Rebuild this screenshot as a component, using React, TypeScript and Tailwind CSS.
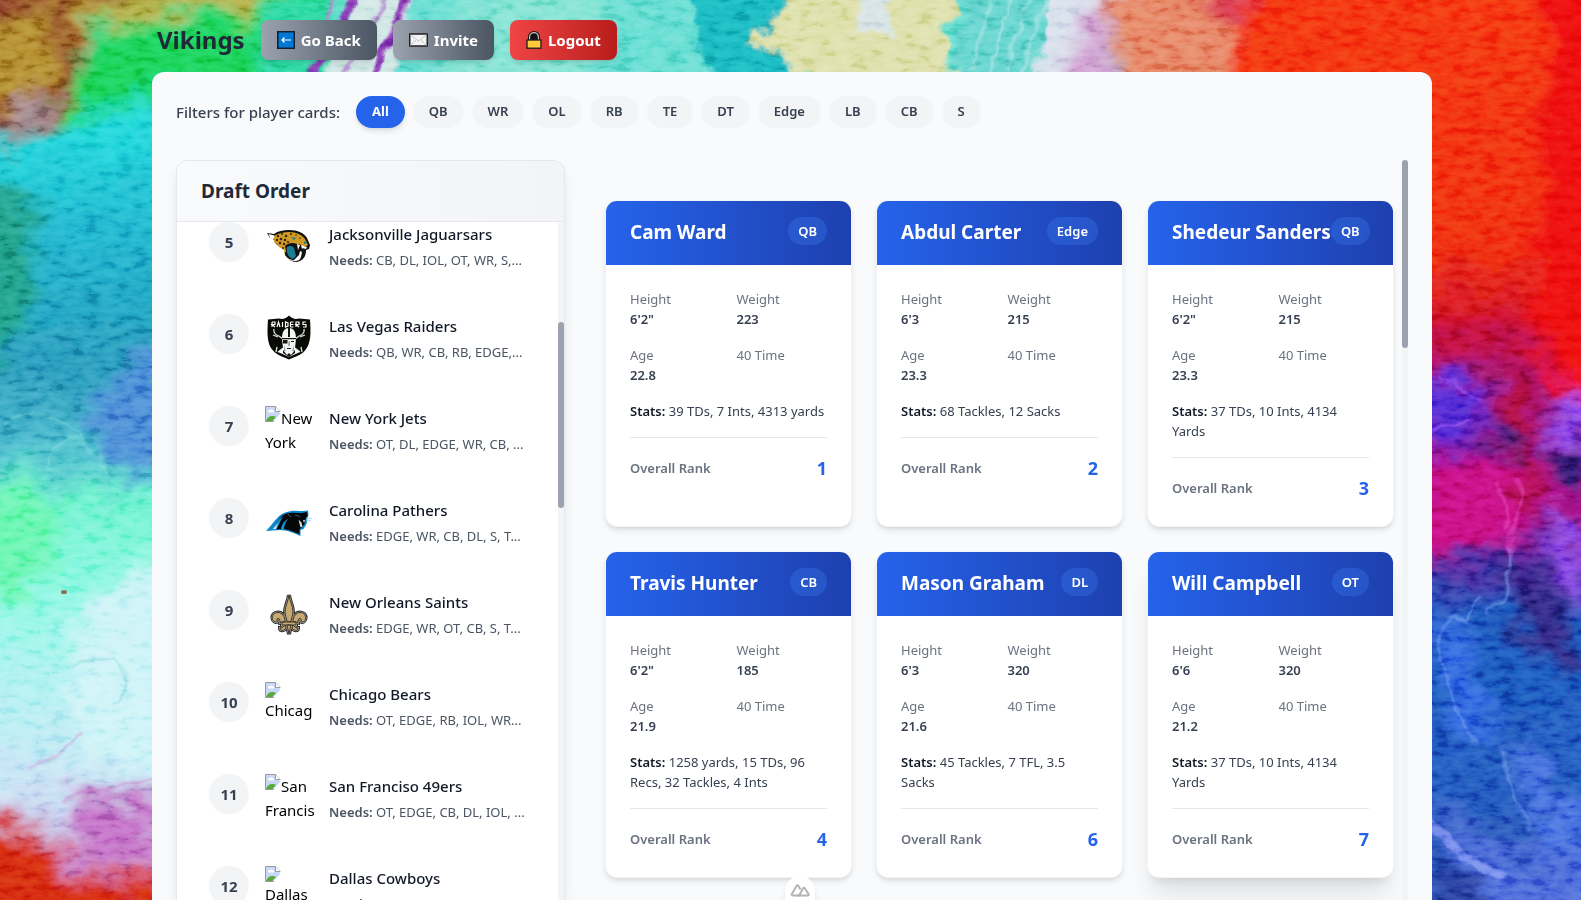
import type { ReactNode } from 'react';

const FILTERS = ['All', 'QB', 'WR', 'OL', 'RB', 'TE', 'DT', 'Edge', 'LB', 'CB', 'S'];

type Team = { pick: number; name: string; needs: string; logo: ReactNode };
type Player = {
  name: string;
  position: string;
  height: string;
  weight: string;
  age: string;
  stats: string;
  rank: number;
};

const PLAYERS: Player[] = [
  { name: 'Cam Ward', position: 'QB', height: '6\'2"', weight: '223', age: '22.8', stats: '39 TDs, 7 Ints, 4313 yards', rank: 1 },
  { name: 'Abdul Carter', position: 'Edge', height: "6'3", weight: '215', age: '23.3', stats: '68 Tackles, 12 Sacks', rank: 2 },
  { name: 'Shedeur Sanders', position: 'QB', height: '6\'2"', weight: '215', age: '23.3', stats: '37 TDs, 10 Ints, 4134 Yards', rank: 3 },
  { name: 'Travis Hunter', position: 'CB', height: '6\'2"', weight: '185', age: '21.9', stats: '1258 yards, 15 TDs, 96 Recs, 32 Tackles, 4 Ints', rank: 4 },
  { name: 'Mason Graham', position: 'DL', height: "6'3", weight: '320', age: '21.6', stats: '45 Tackles, 7 TFL, 3.5 Sacks', rank: 6 },
  { name: 'Will Campbell', position: 'OT', height: "6'6", weight: '320', age: '21.2', stats: '37 TDs, 10 Ints, 4134 Yards', rank: 7 },
];

function BrokenImage({ alt, stacked = false }: { alt: string; stacked?: boolean }) {
  return (
    <div className="h-12 w-12 text-[15px] leading-6 text-black">
      <svg viewBox="0 0 16 16" className={stacked ? 'block h-4 w-4' : 'inline-block h-4 w-4 align-top'} aria-hidden="true">
        <path d="M.5.5h10l5 5v10H.5z" fill="#c6d8f6" stroke="#9a9a9a" />
        <path d="M3 5.500a1.500 1.500 0 0 1 2-1.300 1.600 1.600 0 0 1 3 .3 1 1 0 0 1 .3 2H3.500A1 1 0 0 1 3 5.500z" fill="#fff" />
        <path d="M1 15c1-3.500 4-5.500 7-5l3 .8L7.500 15z" fill="#57ab35" />
        <path d="M10.500.5v5h5" fill="#fff" stroke="#9a9a9a" />
        <path d="M16 8.500V16H9z" fill="#fff" />
        <path d="M15.500 5.500v3.300M9 15.500l6.500-6.700" stroke="#fff" strokeWidth="1.400" />
      </svg>
      {alt}
    </div>
  );
}

function Jaguar() {
  return (
    <svg viewBox="0 0 48 48" className="h-12 w-12" aria-label="Jacksonville Jaguars">
      <path d="M2 11l7 1c4-3 9-4 15-4 9 0 15 3 18 8l3 7-1 4-3 1c0 6-2 10-9 12-6 0-9-3-12-7l-3-6-6-5-3-5-3-1z" fill="#111" />
      <path d="M9 14c5-3 10-4 15-4 8 0 13 3 16 7l3 6-3 2-6-3-7 1-4 3-3 5-5-4-3-5-3-2z" fill="#d19a24" />
      <path d="M3.500 12l6 1.500-1 4-3-1zM10 20l4 5 5 3 1 5c-3-1-4-5-5-6zM38 24l4 1-1 2-4-1z" fill="#fff" />
      <path d="M20 24c5-5 12-3 16 1l-1 9-6 4-7-5z" fill="#111" />
      <path d="M22 25c3-2 6-1 7 1l2 8-3 3c-5-2-7-6-6-12z" fill="#187f96" />
      <path d="M32 22l1 6 2-5zM36 23l1 4 2-3zM19 31c2 5 6 7 10 7l5-5 1-4 2 1-1 5c-1 3-3 4-6 4-5 0-9-3-11-8z" fill="#fff" />
      <path d="M26 15l5 1-2 2zM39 19l3 2-3 1z" fill="#187f96" />
      <g fill="#3a2507">
        <circle cx="13" cy="14" r="1.200" /><circle cx="17" cy="12" r="1" /><circle cx="21" cy="14" r="1.300" />
        <circle cx="26" cy="12" r="1" /><circle cx="31" cy="13" r=".8" /><circle cx="16" cy="17" r="1.300" />
        <circle cx="12" cy="18" r="1.200" /><circle cx="20" cy="18" r="1.300" /><circle cx="15" cy="21" r="1.300" />
        <circle cx="19" cy="22" r="1.200" /><circle cx="23" cy="20" r="1.100" /><circle cx="35" cy="16" r=".7" />
        <circle cx="18" cy="26" r="1" />
      </g>
    </svg>
  );
}

function Raider() {
  return (
    <svg viewBox="0 0 48 48" className="h-12 w-12" aria-label="Las Vegas Raiders">
      <path d="M24 1.500c3 3 6 4 10 3l11 1c1 14 1 24-5 31-4 5-10 6-16 9-6-3-12-4-16-9C2 30 2 20 3 5.500l11-1c4 1 7 0 10-3z" fill="#080a04" />
      <path d="M7 8v5M7 8h3v2.500H7l3 2.500M12 13l1.500-5 1.500 5M17.500 8v5M20.500 8v5l2.500-1V9zM25.500 8h3m-3 2.500h3m-3 2.500h3m-3-5v5M31 13V8h3v2.500h-3l3 2.500M41 8h-3v2.500h3V13h-3" fill="none" stroke="#fff" strokeWidth="1.200" />
      <path d="M9 15c-1 4 2 6 5 7l21 16M39 15c1 4-2 6-5 7L13 38M8 21l5 2M40 21l-5 2M12 33l-1 5M36 33l1 5" fill="none" stroke="#dfe1e1" strokeWidth="1.300" />
      <path d="M17 25c0-7 2-11 7-11s7 4 7 11l-1 9 5 4-11 5-11-5 5-4z" fill="#f4f5f5" />
      <path d="M23 14h2v9h-2zM17 24h14v1.200H17zM18 26h4.500v3.500H18zM26 27h3v1h-3zM22 34h4v1h-4zM18 36l4 5 2-2 2 2 4-5v3l-6 4-6-4z" fill="#15170f" />
      <path d="M23.500 27h1.500v5h-2zM19 31l2 6h-2zM29 31l-2 6h2z" fill="#9fa4a6" />
    </svg>
  );
}

function Panther() {
  return (
    <svg viewBox="0 0 48 48" className="h-12 w-12" aria-label="Carolina Panthers">
      <path d="M1 33C8 26 12 18 19 15l3-1c5-2 12-1 17-1l4-.5.5 4.500-1 3-1 6-3 5-3 1v6c-7-3-13-6-21-6z" fill="#0d86cb" />
      <path d="M5 32c7-6 9-13 15-16 6-2 12-1 17-1l5-1 .5 4-2 3-1 5-3 4-2 1v5c-6-2-12-5-17-5z" fill="#050708" />
      <path d="M5 32l8-9c1-2 3-3 5-4-3 4-4 8-7 13zM16 31c1-5 3-8 7-10-3 4-4 7-4 11z" fill="#1593d4" />
      <path d="M8 31l5-6-2 6zM33.500 21.500l1 4 1 4 2-1-1-4zM38 22l1 3 1-3z" fill="#d8dde0" />
      <path d="M30 17l5 1.500M23 16l3 3" fill="none" stroke="#3f5c6b" />
      <path d="M41 20l6 .5M41 22l5 1" fill="none" stroke="#9bcde9" strokeWidth=".8" />
    </svg>
  );
}

function Saint() {
  const lily =
    'M24 5c-1 7-4 11-4 17 0 3 1.500 6 2 9.500h4C26.500 28 28 25 28 22c0-6-3-10-4-17zM20 31.500c0-5-3-9-7-9-4 0-6 3-5.500 6 .5 3 3 4 5 3-1-1-1-3 .5-3 2 0 2 2 2 4zM28 31.500c0-5 3-9 7-9 4 0 6 3 5.500 6-.5 3-3 4-5 3 1-1 1-3-.5-3-2 0-2 2-2 4zM22 35l2 9 2-9zM20 35c-1 1-2 3-5 3 0 3 4 3 6 0zM28 35c1 1 2 3 5 3 0 3-4 3-6 0zM17 32h14v3H17z';
  return (
    <svg viewBox="0 0 48 48" className="h-12 w-12" aria-label="New Orleans Saints">
      <path d={lily} fill="#2c2d2e" stroke="#2c2d2e" strokeWidth="4" />
      <path d={lily} fill="#aaa59b" stroke="#aaa59b" strokeWidth="2" />
      <path d={lily} fill="#c8a970" stroke="#3a3429" strokeWidth="1" />
    </svg>
  );
}

const TEAMS: Team[] = [
  { pick: 5, name: 'Jacksonville Jaguarsars', needs: 'CB, DL, IOL, OT, WR, S,...', logo: <Jaguar /> },
  { pick: 6, name: 'Las Vegas Raiders', needs: 'QB, WR, CB, RB, EDGE,...', logo: <Raider /> },
  { pick: 7, name: 'New York Jets', needs: 'OT, DL, EDGE, WR, CB, ...', logo: <BrokenImage alt="New York" /> },
  { pick: 8, name: 'Carolina Pathers', needs: 'EDGE, WR, CB, DL, S, T...', logo: <Panther /> },
  { pick: 9, name: 'New Orleans Saints', needs: 'EDGE, WR, OT, CB, S, T...', logo: <Saint /> },
  { pick: 10, name: 'Chicago Bears', needs: 'OT, EDGE, RB, IOL, WR...', logo: <BrokenImage alt="Chicag" stacked /> },
  { pick: 11, name: 'San Franciso 49ers', needs: 'OT, EDGE, CB, DL, IOL, ...', logo: <BrokenImage alt="San Francis" /> },
  { pick: 12, name: 'Dallas Cowboys', needs: 'RB, WR, EDGE, DT, TE...', logo: <BrokenImage alt="Dallas" stacked /> },
];

function Painting() {
  return (
    <svg viewBox="0 0 1581 900" preserveAspectRatio="xMidYMid slice" className="absolute inset-0 h-full w-full" aria-hidden="true">
      <defs>
        <linearGradient id="left" x1="0" y1="0" x2="0" y2="1">
          <stop offset="0" stopColor="#13cf55" />
          <stop offset=".12" stopColor="#14dc9c" />
          <stop offset=".19" stopColor="#1fd6da" />
          <stop offset=".28" stopColor="#1ab4cd" />
          <stop offset=".42" stopColor="#2295b8" />
          <stop offset=".5" stopColor="#45b8cb" />
          <stop offset=".55" stopColor="#69f2cd" />
          <stop offset=".65" stopColor="#8df7e3" />
          <stop offset=".75" stopColor="#b4eff3" />
          <stop offset=".84" stopColor="#c8e0f4" />
          <stop offset=".9" stopColor="#c988cb" />
          <stop offset="1" stopColor="#cf3420" />
        </linearGradient>
        <linearGradient id="right" x1="0" y1="0" x2="0" y2="1">
          <stop offset="0" stopColor="#f53110" />
          <stop offset=".3" stopColor="#f0280c" />
          <stop offset=".38" stopColor="#cc0d25" />
          <stop offset=".46" stopColor="#7c16a0" />
          <stop offset=".54" stopColor="#b30d80" />
          <stop offset=".61" stopColor="#4a1f9a" />
          <stop offset=".66" stopColor="#184fb8" />
          <stop offset=".8" stopColor="#1a55bd" />
          <stop offset="1" stopColor="#2c49b0" />
        </linearGradient>
        <filter id="brush" x="-20%" y="-20%" width="140%" height="140%">
          <feGaussianBlur stdDeviation="9" result="soft" />
          <feTurbulence type="fractalNoise" baseFrequency=".025 .035" numOctaves="5" seed="7" result="noise" />
          <feDisplacementMap in="soft" in2="noise" scale="50" xChannelSelector="R" yChannelSelector="G" />
          <feGaussianBlur stdDeviation=".8" />
        </filter>
        <filter id="edge" x="-20%" y="-20%" width="140%" height="140%">
          <feGaussianBlur stdDeviation="2" result="soft" />
          <feTurbulence type="fractalNoise" baseFrequency=".04" numOctaves="4" seed="5" result="noise" />
          <feDisplacementMap in="soft" in2="noise" scale="30" xChannelSelector="R" yChannelSelector="G" />
          <feGaussianBlur stdDeviation=".7" />
        </filter>
        <filter id="fine" x="-20%" y="-20%" width="140%" height="140%">
          <feGaussianBlur stdDeviation="1.200" result="soft" />
          <feTurbulence type="fractalNoise" baseFrequency=".04" numOctaves="3" seed="3" result="noise" />
          <feDisplacementMap in="soft" in2="noise" scale="14" xChannelSelector="R" yChannelSelector="G" />
        </filter>
        <filter id="grain" x="0" y="0" width="100%" height="100%">
          <feTurbulence type="fractalNoise" baseFrequency=".06 .14" numOctaves="5" seed="12" />
          <feColorMatrix type="matrix" values="2.400 0 0 0 -.7  2.400 0 0 0 -.7  2.400 0 0 0 -.7  0 0 0 0 1" />
        </filter>
      </defs>
      <rect width="1581" height="900" fill="#62dcd0" />
      <g filter="url(#brush)">
        <rect x="-60" y="-60" width="400" height="1020" fill="url(#left)" />
        <rect x="1215" y="-60" width="440" height="1020" fill="url(#right)" />
        <path d="M-40-40H190L90 30 65 115 45 130-40 140z" fill="#8b3422" />
        <path d="M-20 20L50 5 60 60 30 110-20 110zM75-20L100 5 85 45 70 50z" fill="#b08a2c" />
        <path d="M20 100L60 95 45 120 10 125z" fill="#a58b95" />
        <path d="M90 15L170-30H290L250 20 190 10 110 30z" fill="#b0ac40" />
        <path d="M70 80L100 40 150 25 300 20 300 80 150 95 60 125z" fill="#12d152" />
        <path d="M270 0H340L320 90H250z" fill="#27d7a0" />
        <path d="M90 400L170 340 200 480 120 478 90 440z" fill="#4589d4" />
        <path d="M-20 170L40 200 30 300-20 400z" fill="#1c9f88" />
        <path d="M-20 490L60 490 40 590-20 600z" fill="#63f5ae" />
        <path d="M100 590L170 560V770L90 770 60 680z" fill="#cbf3f7" />
        <path d="M60 800L160 790V850L90 870z" fill="#c06ac4" />
        <path d="M-40 815L40 830 80 880 170 880V960H-40z" fill="#d42708" />
        <path d="M480-20H600V90H440z" fill="#7fe2d2" />
        <path d="M1030-40H1120L1100 110H1010z" fill="#d7dfeb" />
        <path d="M1080 15L1110 5V110H1060z" fill="#cf9fd0" />
        <path d="M1110-40H1230L1230 110H1115z" fill="#e58260" />
        <path d="M1205-20H1250V20L1210 20z" fill="#d8344a" />
        <path d="M1550-20H1620V400H1560L1530 300z" fill="#ee0810" />
        <path d="M1420 365L1475 380 1490 410 1470 440 1420 450z" fill="#4c22d2" />
        <path d="M1500 370L1540 380 1535 520 1500 480z" fill="#b00d3a" />
        <path d="M1490 420L1530 440 1520 465 1480 450zM1545 450L1590 440V490L1545 480z" fill="#271273" />
        <path d="M1555 405L1600 385V440H1550zM1545 510L1570 520 1590 600 1560 580z" fill="#8c45ef" />
        <path d="M1420 470L1510 460 1530 540 1420 560z" fill="#c80d82" />
        <path d="M1500 560L1560 580 1590 680 1530 650z" fill="#2c2382" />
        <path d="M1430 610L1470 630 1490 740 1460 740 1440 660z" fill="#2c63e0" />
        <path d="M1500 740L1570 790 1600 880 1560 860z" fill="#3f6ce0" />
        <path d="M1430 790L1500 860 1600 840V920H1500z" fill="#4565d8" />
        <path d="M1440 850L1490 890V920H1430z" fill="#20389b" />
      </g>
      <g filter="url(#edge)">
        <path d="M355-30L425-30 380 100 315 100z" fill="#cfe6e4" />
        <path d="M690-30H800L790 100H745L700 60z" fill="#18b7bf" />
        <path d="M800-30H965L945 30 960 100H815L785 55 740 38 775 22z" fill="#dcdea7" />
        <path d="M850-30L890-30 890 30 860 30z" fill="#d5e3e4" />
        <path d="M965-30H1055L1030 100H955z" fill="#5ed2cb" />
      </g>
      <g filter="url(#fine)" fill="none" strokeLinecap="round">
        <path d="M355-10C345 25 325 55 308 80M405-10C400 25 380 45 372 85" stroke="#8735b4" strokeWidth="7" />
        <path d="M340-10L318 40M385-10C380 30 350 50 340 85M412-10L396 30" stroke="#b584cf" strokeWidth="3" />
        <g strokeWidth="2" opacity=".5">
          <path d="M4 422C60 405 80 430 110 475M50 470C45 430 100 430 108 474" stroke="#8ce3e0" />
          <path d="M75 665L115 658Q140 690 110 705" stroke="#67c9cf" />
          <path d="M30 770L80 735M60 800L150 780M70 850L150 830" stroke="#c25bb9" />
        </g>
        <path d="M1440 640L1450 615 1465 622 1480 595M1510 550L1505 600 1490 612M1440 640L1450 690 1475 745M1502 750L1510 790 1530 830" stroke="#6f9bf0" strokeWidth="2.500" opacity=".65" />
        <path d="M1425 815Q1450 850 1500 875" stroke="#7f94f2" strokeWidth="10" opacity=".8" />
        <path d="M1515 480C1530 490 1515 520 1508 555M1500 480L1508 530" stroke="#e33cc0" strokeWidth="3" opacity=".6" />
        <path d="M1440 375L1480 400M1435 430L1470 420" stroke="#9b4cf4" strokeWidth="4" opacity=".6" />
        <path d="M990 5L970 72M1010 0L990 72M1045 0L1020 72M1030 0L1005 72" stroke="#a9e4e4" strokeWidth="3" opacity=".7" />
      </g>
      <rect width="1581" height="900" filter="url(#grain)" opacity=".4" className="mix-blend-soft-light" />
      <ellipse cx="64" cy="592" rx="3" ry="2" fill="#8d6d5c" />
    </svg>
  );
}

function ArrowIcon() {
  return (
    <svg viewBox="0 0 18 18" className="h-[18px] w-[18px]" aria-hidden="true">
      <rect x=".75" y=".75" width="16.500" height="16.500" fill="#0078d7" stroke="#12202e" strokeWidth="1.500" />
      <path d="M14 9H5M7.500 6.500L5 9l2.500 2.500" fill="none" stroke="#fff" strokeWidth="1.200" />
    </svg>
  );
}

function EnvelopeIcon() {
  return (
    <svg viewBox="0 0 19 18" className="h-[18px] w-[19px]" aria-hidden="true">
      <rect x=".75" y="3" width="17.500" height="12" fill="#f4f4f4" stroke="#222" strokeWidth="1.500" />
      <path d="M1.500 4l8 6 8-6M1.500 14.500l6-6M17.500 14.500l-6-6" fill="none" stroke="#c4c4c4" />
    </svg>
  );
}

function LockIcon() {
  return (
    <svg viewBox="0 0 16 18" className="h-[18px] w-4" aria-hidden="true">
      <path d="M3 9.500V6a5 5 0 0 1 10 0v3.500z" fill="#111" stroke="#111" strokeWidth="2" />
      <path d="M3.600 9V6a4.400 4.400 0 0 1 8.800 0v3" fill="none" stroke="#c8c8c8" strokeWidth="1.200" />
      <rect x="1" y="9" width="14" height="8.200" fill="#ffc83d" stroke="#1c1c1c" strokeWidth="1.300" />
    </svg>
  );
}

function HeaderButton({ tone, icon, children }: { tone: string; icon: ReactNode; children: ReactNode }) {
  return (
    <button type="button" className={`flex h-10 items-center gap-1.5 rounded-lg bg-linear-to-r px-4 text-[15px] font-bold text-white shadow-md ${tone}`}>
      {icon}
      {children}
    </button>
  );
}

function Fact({ label, value }: { label: string; value?: string }) {
  return (
    <div>
      <dt className="text-[#6b7280]">{label}</dt>
      <dd className="font-semibold text-[#374151]">{value}</dd>
    </div>
  );
}

function PlayerCard({ player, raised }: { player: Player; raised: boolean }) {
  return (
    <article className={`overflow-hidden rounded-xl border border-gray-100 bg-white ${raised ? 'shadow-xl' : 'shadow-md'}`}>
      <header className="flex h-16 items-start justify-between bg-linear-to-r from-[#2563eb] to-[#1e40af] px-6 pt-4">
        <h3 className="whitespace-nowrap text-[19px] leading-[30px] font-bold text-white">{player.name}</h3>
        <span className="rounded-full bg-[#3b82f6]/30 px-2.5 py-1 text-[13px] leading-5 font-semibold text-white">{player.position}</span>
      </header>
      <div className="p-6 text-[13px] leading-5">
        <dl className="grid grid-cols-2 gap-4">
          <Fact label="Height" value={player.height} />
          <Fact label="Weight" value={player.weight} />
          <Fact label="Age" value={player.age} />
          <Fact label="40 Time" />
        </dl>
        <p className="mt-4 text-[#374151]">
          <span className="font-semibold text-[#111827]">Stats:</span> {player.stats}
        </p>
        <div className="mt-4 flex items-center justify-between border-t border-gray-200 pt-4">
          <span className="font-semibold text-[#6b7280]">Overall Rank</span>
          <span className="text-[18px] leading-7 font-bold text-[#2563eb]">{player.rank}</span>
        </div>
      </div>
    </article>
  );
}

export default function App() {
  return (
    <div className="relative h-screen overflow-hidden font-['Noto_Sans','Open_Sans',sans-serif]">
      <Painting />
      <div className="relative flex h-full flex-col pl-[3px]">
        <div className="mx-auto flex min-h-0 w-full max-w-7xl flex-1 flex-col">
          <header className="flex items-center gap-4 pt-5 pb-3 pl-[5px]">
            <h1 className="text-[24px] leading-10 font-bold text-[#1f2937]">Vikings</h1>
            <HeaderButton tone="from-[#9ca3af] to-[#4b5563]" icon={<ArrowIcon />}>Go Back</HeaderButton>
            <HeaderButton tone="from-[#9ca3af] to-[#4b5563]" icon={<EnvelopeIcon />}>Invite</HeaderButton>
            <HeaderButton tone="from-[#ef4444] to-[#b91c1c]" icon={<LockIcon />}>Logout</HeaderButton>
          </header>

          <main className="flex min-h-0 flex-1 flex-col rounded-t-xl bg-[#f9fafb] px-6 pt-6">
            <div className="flex items-center gap-4">
              <h2 className="text-[15px] font-medium text-[#374151]">Filters for player cards:</h2>
              <div className="flex gap-2">
                {FILTERS.map((f) => (
                  <button
                    key={f}
                    type="button"
                    className={`h-8 rounded-full px-4 text-[13px] ${f === 'All' ? 'bg-[#2563eb] font-bold text-white shadow-md' : 'bg-[#f3f4f6] font-semibold text-[#374151]'}`}
                  >
                    {f}
                  </button>
                ))}
              </div>
            </div>

            <div className="mt-8 flex min-h-0 flex-1 gap-6">
              <section className="flex w-[389px] shrink-0 flex-col overflow-hidden rounded-t-xl border border-b-0 border-gray-200 bg-white shadow-lg">
                <h2 className="border-b border-gray-200 bg-linear-to-r from-[#f9fafb] to-[#f3f4f6] px-6 py-4 text-[19px] leading-7 font-bold text-[#1f2937]">
                  Draft Order
                </h2>
                <div className="flex min-h-0 flex-1">
                  <ol className="flex min-w-0 flex-1 flex-col gap-11 overflow-hidden px-8">
                    {TEAMS.map((t) => (
                      <li key={t.pick} className="flex h-12 shrink-0 items-start gap-4">
                        <span className="flex h-10 w-10 shrink-0 items-center justify-center rounded-full bg-[#f3f4f6] text-[15px] font-bold text-[#374151]">
                          {t.pick}
                        </span>
                        <div className="shrink-0">{t.logo}</div>
                        <div className="min-w-0 whitespace-nowrap">
                          <p className="text-[15px] leading-6 font-medium text-[#111827]">{t.name}</p>
                          <p className="mt-1 text-[13px] leading-5 text-[#4b5563]">
                            <span className="font-semibold">Needs:</span> {t.needs}
                          </p>
                        </div>
                      </li>
                    ))}
                  </ol>
                  <div className="w-1.5 rounded-t-full bg-[#f3f4f6] pt-[100px]">
                    <div className="h-[186px] rounded-full bg-[#9ca3af]" />
                  </div>
                </div>
              </section>

              <section className="flex min-w-0 flex-1 overflow-hidden">
                <div className="grid flex-1 auto-rows-min grid-cols-3 gap-6 pt-10 pr-2 pl-4">
                  {PLAYERS.map((p) => (
                    <PlayerCard key={p.name} player={p} raised={p.name === 'Will Campbell'} />
                  ))}
                </div>
                <div className="w-1.5 rounded-t-full bg-[#f3f4f6]">
                  <div className="h-[188px] rounded-full bg-[#9ca3af]" />
                </div>
              </section>
            </div>
          </main>
        </div>
      </div>

      <div className="absolute bottom-0 left-[785px] flex h-6 w-[30px] items-center justify-center rounded-t-full bg-white pt-1 shadow-md">
        <svg viewBox="0 0 20 14" className="h-[14px] w-5" fill="none" stroke="#b4b4b4" strokeWidth="2" strokeLinejoin="round" aria-hidden="true">
          <path d="M10.500 12.500H3Q1 12.500 2 10.800L6.500 3Q7.500 1.500 8.500 3L10.500 6.500" />
          <path d="M7.500 12.500Q9 12.500 10 11L13 5.500Q14 4 15 5.500L18.500 11Q19.300 12.500 17.500 12.500z" />
        </svg>
      </div>
    </div>
  );
}
